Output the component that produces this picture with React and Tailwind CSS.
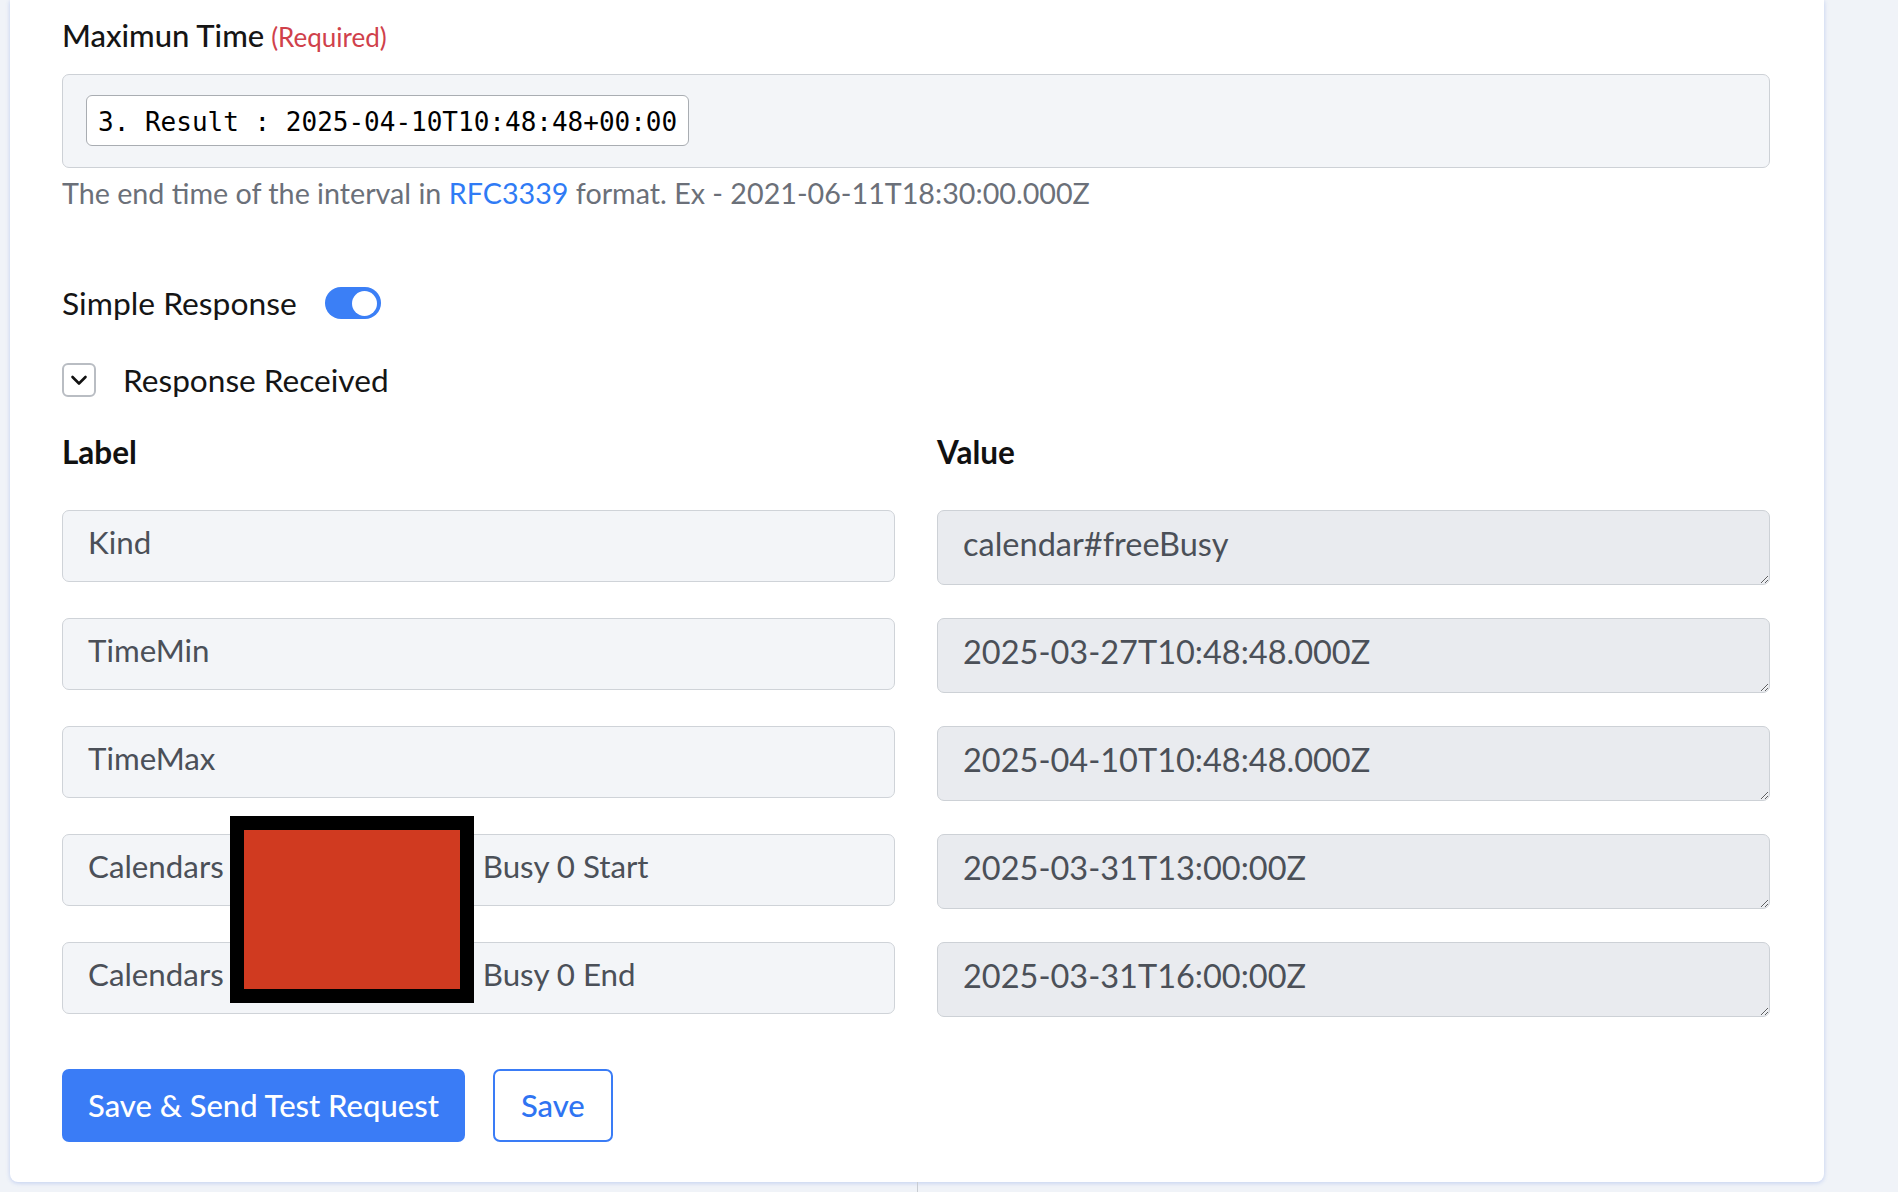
import { useState } from "react";

const rows = [
  { label: "Kind", value: "calendar#freeBusy" },
  { label: "TimeMin", value: "2025-03-27T10:48:48.000Z" },
  { label: "TimeMax", value: "2025-04-10T10:48:48.000Z" },
  { label: "Calendars", tail: "Busy 0 Start", value: "2025-03-31T13:00:00Z" },
  { label: "Calendars", tail: "Busy 0 End", value: "2025-03-31T16:00:00Z" },
];

function Toggle({ on, onChange }) {
  return (
    <button
      onClick={() => onChange(!on)}
      className={`w-[56px] h-[32px] rounded-full flex items-center px-[4px] ${
        on ? "bg-[#3b7ff6] justify-end" : "bg-gray-300 justify-start"
      }`}
    >
      <span className="w-[25px] h-[25px] rounded-full bg-white block"></span>
    </button>
  );
}

export default function App() {
  let [simple, setSimple] = useState(true);
  let [open, setOpen] = useState(true);

  return (
    <div className="min-h-screen bg-[#f0f3f8] flex flex-col font-[Lato,sans-serif]">
      <div className="ml-[10px] w-[1814px] bg-white rounded-b-lg shadow-[0_1px_4px_rgba(70,110,220,0.28)] pl-[52px] pr-[54px] pt-[15px] pb-[40px]">
        <div className="flex items-baseline gap-[7px] leading-[40px]">
          <span className="text-[31px] font-medium text-[#151515]">Maximun Time</span>
          <span className="text-[26px] text-[#d0414b]">(Required)</span>
        </div>

        <div className="mt-[17px] h-[94px] bg-[#f3f5f8] border border-[#cdd1d6] rounded-[7px] pl-[23px] pt-[20px]">
          <span className="inline-flex items-center h-[51px] px-[11px] pt-[3px] bg-white border border-[#a9adb2] rounded-[6px] font-['DejaVu_Sans_Mono',monospace] text-[26px] text-black">
            3. Result : 2025-04-10T10:48:48+00:00
          </span>
        </div>

        <p className="mt-[6px] text-[28.7px] leading-[38px] text-[#6b7079]">
          The end time of the interval in{" "}
          <a className="text-[#2f7bf5]">RFC3339</a> format. Ex -
          2021-06-11T18:30:00.000Z
        </p>

        <div className="mt-[71px] flex items-center gap-[28px] leading-[40px]">
          <span className="text-[31.8px] text-[#151515]">Simple Response</span>
          <Toggle on={simple} onChange={setSimple} />
        </div>

        <div className="mt-[37px] flex items-center gap-[27px] leading-[40px]">
          <button
            onClick={() => setOpen(!open)}
            className="w-[34px] h-[34px] border-2 border-[#b9bdc3] rounded-[6px] flex items-center justify-center"
          >
            <svg width="20" height="20" viewBox="0 0 20 20" fill="none" stroke="#111" strokeWidth="2.6" strokeLinecap="round" strokeLinejoin="round">
              <path d={open ? "M3.5 7l6.5 6.5 6.5-6.5" : "M7 3.5l6.5 6.5-6.5 6.5"} />
            </svg>
          </button>
          <span className="text-[31.6px] text-[#151515]">Response Received</span>
        </div>

        {open && (
          <div className="relative">
            <div className="mt-[34px] grid grid-cols-2 gap-x-[42px] text-[31.5px] font-bold text-[#111] leading-[36px]">
              <span>Label</span>
              <span>Value</span>
            </div>
            <div className="mt-[40px] grid grid-cols-2 gap-x-[42px] gap-y-[33px] items-start">
              {rows.map((r, i) => [
                <div
                  key={`l${i}`}
                  className="h-[72px] bg-[#f3f5f8] border border-[#cfd3d8] rounded-[7px] px-[25px] pb-[7px] flex items-center text-[31.3px] text-[#4b5058] whitespace-pre"
                >
                  {r.label}
                  {r.tail && (
                    <>
                      <span className="inline-block w-[259px]"></span>
                      {r.tail}
                    </>
                  )}
                </div>,
                <textarea
                  key={`v${i}`}
                  readOnly
                  rows={1}
                  value={r.value}
                  className="h-[75px] w-full bg-[#e9ebef] border border-[#cdd1d6] rounded-[7px] px-[25px] pt-[10px] text-[32.5px] leading-[45px] text-[#4b5058] outline-none"
                />,
              ])}
            </div>
            {/* redacted calendar id */}
            <div className="absolute left-[168px] top-[382px] w-[244px] h-[187px] bg-[#d03a20] border-[14px] border-black"></div>
          </div>
        )}

        <div className="mt-[52px] flex gap-[28px]">
          <button className="h-[73px] px-[26px] bg-[#3a7cf6] rounded-[7px] text-white text-[31px] font-medium">
            Save &amp; Send Test Request
          </button>
          <button className="h-[73px] px-[26px] bg-white border-2 border-[#3a7cf6] rounded-[7px] text-[#2f74f2] text-[31px] font-medium">
            Save
          </button>
        </div>
      </div>
      <div className="flex-1 ml-[917px] border-l border-[#c8ccd2]"></div>
    </div>
  );
}
